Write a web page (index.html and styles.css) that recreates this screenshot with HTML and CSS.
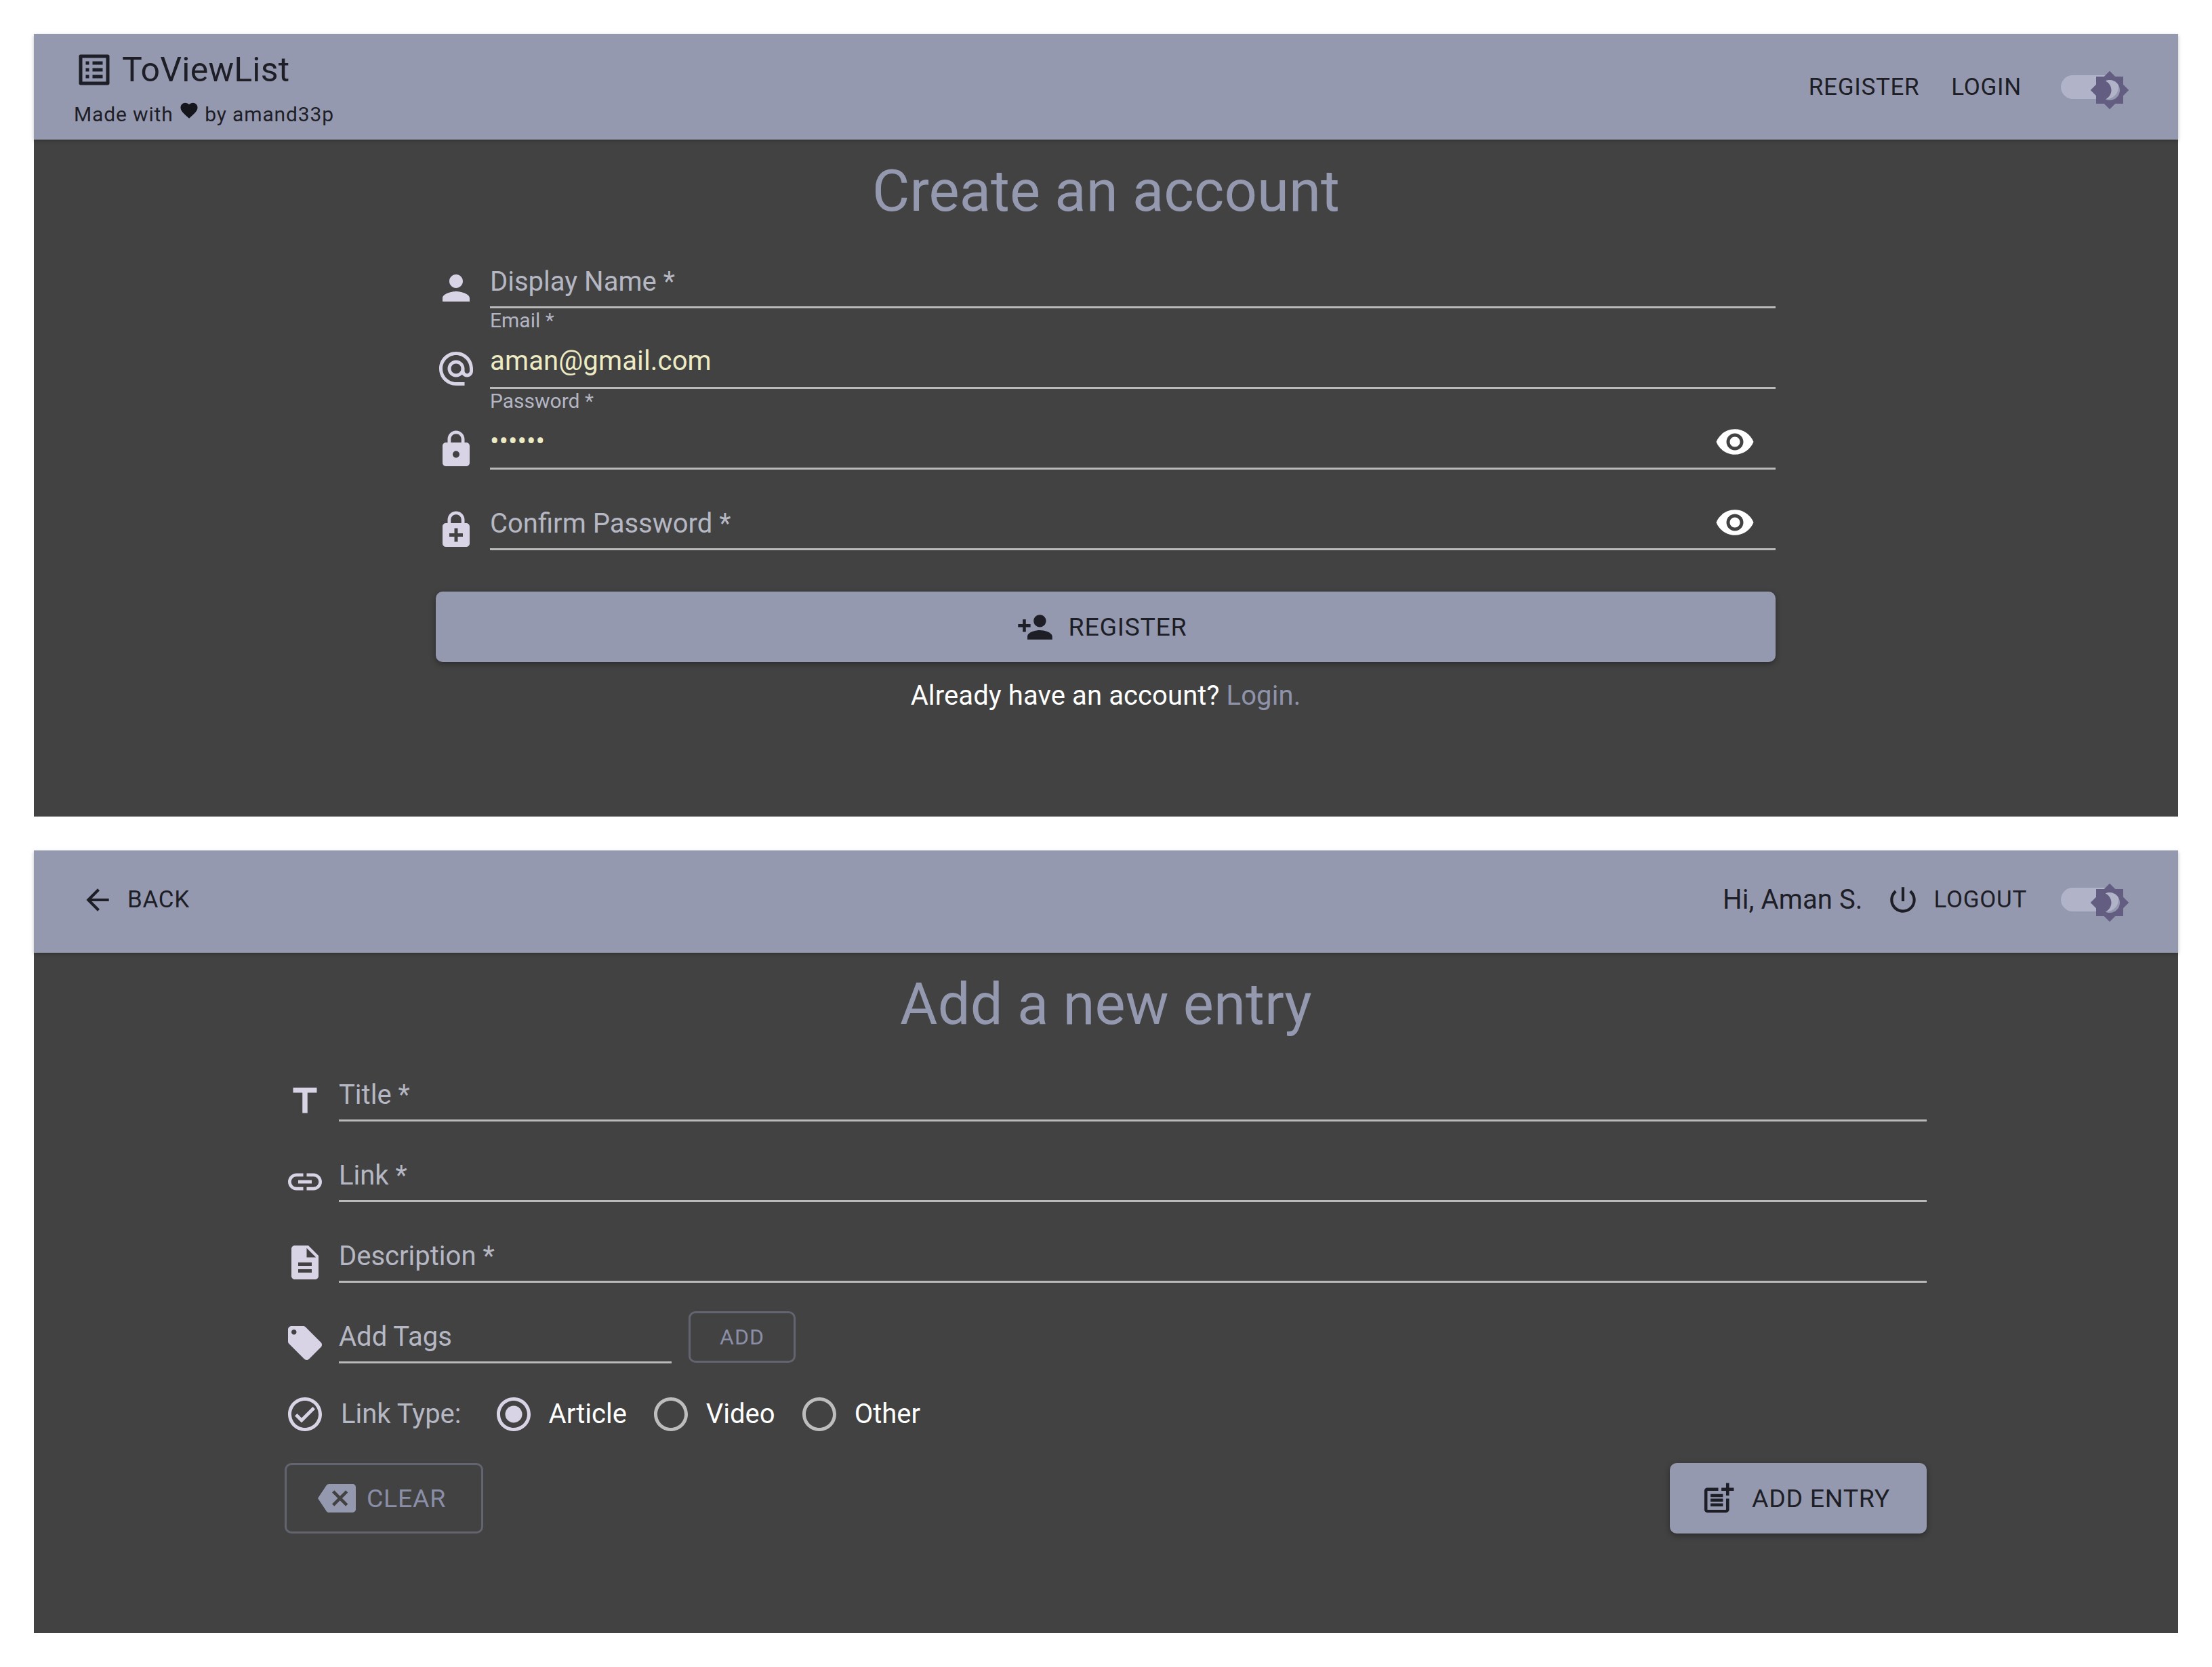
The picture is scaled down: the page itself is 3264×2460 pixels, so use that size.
FILE: index.html
```html
<!DOCTYPE html>
<html lang="en">
  <head>
    <meta charset="UTF-8" />
    <title>ToViewList</title>
    <link rel="stylesheet" href="styles.css">
  </head>
  <body>
    <!-- register screen -->
    <section class="panel">
      <header class="topbar topbar-brand">
        <div class="brand">
          <div class="brand-row">
            <svg class="icon" viewBox="0 0 24 24"><path d="M19 5v14H5V5h14m1.1-2H3.9c-.5 0-.9.4-.9.9v16.2c0 .4.4.9.9.9h16.2c.4 0 .9-.5.9-.9V3.9c0-.5-.5-.9-.9-.9zM11 7h6v2h-6V7zm0 4h6v2h-6v-2zm0 4h6v2h-6zM7 7h2v2H7zm0 4h2v2H7zm0 4h2v2H7z"/></svg>
            <span class="brand-name">ToViewList</span>
          </div>
          <p class="tagline">Made with
            <svg class="heart" viewBox="0 0 24 24"><path d="M12 21.35l-1.45-1.32C5.4 15.36 2 12.28 2 8.5 2 5.42 4.42 3 7.5 3c1.74 0 3.41.81 4.5 2.09C13.09 3.81 14.76 3 16.5 3 19.58 3 22 5.42 22 8.5c0 3.78-3.4 6.86-8.55 11.54L12 21.35z"/></svg>
            by amand33p</p>
        </div>
        <nav class="nav">
          <a class="nav-link nav-register">REGISTER</a>
          <a class="nav-link">LOGIN</a>
          <div class="switch">
            <svg class="switch-thumb" viewBox="0 0 24 24"><path d="M20 8.69V4h-4.69L12 .69 8.69 4H4v4.69L.69 12 4 15.31V20h4.69L12 23.31 15.31 20H20v-4.69L23.31 12 20 8.69zM12 18c-.89 0-1.74-.2-2.5-.55C11.56 16.5 13 14.42 13 12s-1.44-4.5-3.5-5.45C10.26 6.2 11.11 6 12 6c3.31 0 6 2.69 6 6s-2.69 6-6 6z"/></svg>
          </div>
        </nav>
      </header>

      <h1 class="page-title">Create an account</h1>

      <form class="form form-small">
        <div class="row">
          <svg class="icon field-icon" viewBox="0 0 24 24"><path d="M12 12c2.21 0 4-1.79 4-4s-1.79-4-4-4-4 1.79-4 4 1.79 4 4 4zm0 2c-2.67 0-8 1.34-8 4v2h16v-2c0-2.66-5.33-4-8-4z"/></svg>
          <div class="field">
            <div class="field-line"><span class="placeholder">Display Name *</span></div>
          </div>
        </div>
        <div class="row">
          <svg class="icon field-icon" viewBox="0 0 24 24"><path d="M12 2C6.48 2 2 6.48 2 12s4.48 10 10 10h5v-2h-5c-4.34 0-8-3.66-8-8s3.66-8 8-8 8 3.66 8 8v1.43c0 .79-.71 1.57-1.5 1.57s-1.5-.78-1.5-1.57V12c0-2.76-2.24-5-5-5s-5 2.24-5 5 2.24 5 5 5c1.38 0 2.64-.56 3.54-1.47.65.89 1.77 1.47 2.96 1.47 1.97 0 3.5-1.6 3.5-3.57V12c0-5.52-4.48-10-10-10zm0 13c-1.66 0-3-1.34-3-3s1.34-3 3-3 3 1.34 3 3-1.34 3-3 3z"/></svg>
          <div class="field">
            <label class="float-label">Email *</label>
            <div class="field-line"><span class="value">aman@gmail.com</span></div>
          </div>
        </div>
        <div class="row">
          <svg class="icon field-icon" viewBox="0 0 24 24"><path d="M18 8h-1V6c0-2.76-2.24-5-5-5S7 3.24 7 6v2H6c-1.1 0-2 .9-2 2v10c0 1.1.9 2 2 2h12c1.1 0 2-.9 2-2V10c0-1.1-.9-2-2-2zm-6 9c-1.1 0-2-.9-2-2s.9-2 2-2 2 .9 2 2-.9 2-2 2zm3.1-9H8.9V6c0-1.71 1.39-3.1 3.1-3.1 1.71 0 3.1 1.39 3.1 3.1v2z"/></svg>
          <div class="field">
            <label class="float-label">Password *</label>
            <div class="field-line">
              <span class="value dots">••••••</span>
              <svg class="icon eye" viewBox="0 0 24 24"><path d="M12 4.5C7 4.5 2.73 7.61 1 12c1.73 4.39 6 7.5 11 7.5s9.27-3.11 11-7.5c-1.73-4.39-6-7.5-11-7.5zM12 17c-2.76 0-5-2.24-5-5s2.24-5 5-5 5 2.24 5 5-2.24 5-5 5zm0-8c-1.66 0-3 1.34-3 3s1.34 3 3 3 3-1.34 3-3-1.34-3-3-3z"/></svg>
            </div>
          </div>
        </div>
        <div class="row">
          <svg class="icon field-icon" viewBox="0 0 24 24"><path d="M18 8h-1V6c0-2.76-2.24-5-5-5S7 3.24 7 6v2H6c-1.11 0-2 .9-2 2v10c0 1.1.89 2 2 2h12c1.1 0 2-.9 2-2V10c0-1.1-.9-2-2-2zM8.9 6c0-1.71 1.39-3.1 3.1-3.1s3.1 1.39 3.1 3.1v2H8.9V6zM16 16h-3v3h-2v-3H8v-2h3v-3h2v3h3v2z"/></svg>
          <div class="field">
            <div class="field-line">
              <span class="placeholder">Confirm Password *</span>
              <svg class="icon eye" viewBox="0 0 24 24"><path d="M12 4.5C7 4.5 2.73 7.61 1 12c1.73 4.39 6 7.5 11 7.5s9.27-3.11 11-7.5c-1.73-4.39-6-7.5-11-7.5zM12 17c-2.76 0-5-2.24-5-5s2.24-5 5-5 5 2.24 5 5-2.24 5-5 5zm0-8c-1.66 0-3 1.34-3 3s1.34 3 3 3 3-1.34 3-3-1.34-3-3-3z"/></svg>
            </div>
          </div>
        </div>
        <button type="button" class="btn btn-solid btn-wide">
          <svg class="btn-icon" viewBox="0 0 24 24"><path d="M15 12c2.21 0 4-1.79 4-4s-1.79-4-4-4-4 1.79-4 4 1.79 4 4 4zm-9-2V7H4v3H1v2h3v3h2v-3h3v-2H6zm9 4c-2.67 0-8 1.34-8 4v2h16v-2c0-2.66-5.33-4-8-4z"/></svg>
          REGISTER
        </button>
        <p class="switch-text">Already have an account? <a class="switch-link">Login.</a></p>
      </form>
    </section>

    <!-- add entry screen -->
    <section class="panel">
      <header class="topbar topbar-slim">
        <a class="back">
          <svg class="nav-icon" viewBox="0 0 24 24"><path d="M20 11H7.83l5.59-5.59L12 4l-8 8 8 8 1.41-1.41L7.83 13H20v-2z"/></svg>
          BACK
        </a>
        <nav class="nav">
          <span class="greeting">Hi, Aman S.</span>
          <a class="nav-link logout">
            <svg class="nav-icon" viewBox="0 0 24 24"><path d="M13 3h-2v10h2V3zm4.83 2.17l-1.42 1.42C17.99 7.86 19 9.81 19 12c0 3.87-3.13 7-7 7s-7-3.13-7-7c0-2.19 1.01-4.14 2.58-5.42L6.17 5.17C4.23 6.82 3 9.26 3 12c0 4.97 4.03 9 9 9s9-4.03 9-9c0-2.74-1.23-5.18-3.17-6.83z"/></svg>
            LOGOUT
          </a>
          <div class="switch">
            <svg class="switch-thumb" viewBox="0 0 24 24"><path d="M20 8.69V4h-4.69L12 .69 8.69 4H4v4.69L.69 12 4 15.31V20h4.69L12 23.31 15.31 20H20v-4.69L23.31 12 20 8.69zM12 18c-.89 0-1.74-.2-2.5-.55C11.56 16.5 13 14.42 13 12s-1.44-4.5-3.5-5.45C10.26 6.2 11.11 6 12 6c3.31 0 6 2.69 6 6s-2.69 6-6 6z"/></svg>
          </div>
        </nav>
      </header>

      <h1 class="page-title">Add a new entry</h1>

      <form class="form form-large">
        <div class="row">
          <svg class="icon field-icon" viewBox="0 0 24 24"><path d="M5 4v3h5.5v12h3V7H19V4z"/></svg>
          <div class="field">
            <div class="field-line"><span class="placeholder">Title *</span></div>
          </div>
        </div>
        <div class="row">
          <svg class="icon field-icon" viewBox="0 0 24 24"><path d="M3.9 12c0-1.71 1.39-3.1 3.1-3.1h4V7H7c-2.76 0-5 2.24-5 5s2.24 5 5 5h4v-1.9H7c-1.71 0-3.1-1.39-3.1-3.1zM8 13h8v-2H8v2zm9-6h-4v1.9h4c1.71 0 3.1 1.39 3.1 3.1s-1.39 3.1-3.1 3.1h-4V17h4c2.76 0 5-2.24 5-5s-2.24-5-5-5z"/></svg>
          <div class="field">
            <div class="field-line"><span class="placeholder">Link *</span></div>
          </div>
        </div>
        <div class="row">
          <svg class="icon field-icon" viewBox="0 0 24 24"><path d="M14 2H6c-1.1 0-1.99.9-1.99 2L4 20c0 1.1.89 2 1.99 2H18c1.1 0 2-.9 2-2V8l-6-6zm2 16H8v-2h8v2zm0-4H8v-2h8v2zm-3-5V3.5L18.5 9H13z"/></svg>
          <div class="field">
            <div class="field-line"><span class="placeholder">Description *</span></div>
          </div>
        </div>
        <div class="row">
          <svg class="icon field-icon" viewBox="0 0 24 24"><path d="M21.41 11.58l-9-9C12.05 2.22 11.55 2 11 2H4c-1.1 0-2 .9-2 2v7c0 .55.22 1.05.59 1.42l9 9c.36.36.86.58 1.41.58.55 0 1.05-.22 1.41-.59l7-7c.37-.36.59-.86.59-1.41 0-.55-.23-1.06-.59-1.42zM5.5 7C4.67 7 4 6.33 4 5.5S4.67 4 5.5 4 7 4.67 7 5.5 6.33 7 5.5 7z"/></svg>
          <div class="field field-tags">
            <div class="field-line"><span class="placeholder">Add Tags</span></div>
          </div>
          <button type="button" class="btn btn-outline btn-add">ADD</button>
        </div>

        <div class="link-type">
          <svg class="icon field-icon" viewBox="0 0 24 24"><path d="M12 2C6.48 2 2 6.48 2 12s4.48 10 10 10 10-4.48 10-10S17.52 2 12 2zm0 18c-4.41 0-8-3.59-8-8s3.59-8 8-8 8 3.59 8 8-3.59 8-8 8zm4.59-12.42L10 14.17l-2.59-2.58L6 13l4 4 8-8z"/></svg>
          <span class="link-type-label">Link Type:</span>
          <label class="radio">
            <svg class="icon radio-on" viewBox="0 0 24 24"><path d="M12 2C6.48 2 2 6.48 2 12s4.48 10 10 10 10-4.48 10-10S17.52 2 12 2zm0 18c-4.42 0-8-3.58-8-8s3.58-8 8-8 8 3.58 8 8-3.58 8-8 8z"/><circle cx="12" cy="12" r="5"/></svg>
            <span class="radio-text">Article</span>
          </label>
          <label class="radio">
            <svg class="icon radio-off" viewBox="0 0 24 24"><path d="M12 2C6.48 2 2 6.48 2 12s4.48 10 10 10 10-4.48 10-10S17.52 2 12 2zm0 18c-4.42 0-8-3.58-8-8s3.58-8 8-8 8 3.58 8 8-3.58 8-8 8z"/></svg>
            <span class="radio-text">Video</span>
          </label>
          <label class="radio">
            <svg class="icon radio-off" viewBox="0 0 24 24"><path d="M12 2C6.48 2 2 6.48 2 12s4.48 10 10 10 10-4.48 10-10S17.52 2 12 2zm0 18c-4.42 0-8-3.58-8-8s3.58-8 8-8 8 3.58 8 8-3.58 8-8 8z"/></svg>
            <span class="radio-text">Other</span>
          </label>
        </div>

        <div class="actions">
          <button type="button" class="btn btn-outline btn-clear">
            <svg class="clear-icon" viewBox="0 0 24 24"><path d="M22 3H7c-.69 0-1.23.35-1.59.88L0 12l5.41 8.11c.36.53.9.89 1.59.89h15c1.1 0 2-.9 2-2V5c0-1.1-.9-2-2-2zm-3 12.59L17.59 17 14 13.41 10.41 17 9 15.59 12.59 12 9 8.41 10.41 7 14 10.59 17.59 7 19 8.41 15.41 12 19 15.59z"/></svg>
            CLEAR
          </button>
          <button type="button" class="btn btn-solid btn-entry">
            <svg class="btn-icon" viewBox="0 0 24 24"><path d="M17 19.22H5V7h7V5H5c-1.1 0-2 .9-2 2v12c0 1.1.9 2 2 2h12c1.1 0 2-.9 2-2v-7h-2v7.22zM19 2h-2v3h-3c.01.01 0 2 0 2h3v2.99c.01.01 2 0 2 0V7h3V5h-3V2zM7 9h8v2H7zm0 3v2h8v-2h-3zm0 3h8v2H7z"/></svg>
            ADD ENTRY
          </button>
        </div>
      </form>
    </section>
  </body>
</html>
```

FILE: styles.css
```css
* {
  margin: 0;
  padding: 0;
  box-sizing: border-box;
  font-family: "Roboto", "Liberation Sans", sans-serif;
}

body {
  background-color: #ffffff;
  padding: 50px;
  display: flex;
  flex-direction: column;
  gap: 50px;
}

.panel {
  height: 1155px;
  background-color: #424242;
}

.icon {
  width: 60px;
  height: 60px;
  flex-shrink: 0;
  fill: currentColor;
}

/* top bars */

.topbar {
  display: flex;
  justify-content: space-between;
  align-items: center;
  background-color: #9599b0;
  color: #1d1e26;
  box-shadow: 0 2px 5px rgba(0, 0, 0, 0.25);
}

.topbar-brand {
  height: 156px;
}

.topbar-slim {
  height: 151px;
  padding-bottom: 6px;
}

.brand {
  align-self: flex-start;
  padding: 23px 0 0 59px;
}

.brand-row {
  display: flex;
  align-items: center;
  gap: 11px;
}

.brand-name {
  font-size: 50px;
  line-height: 60px;
  letter-spacing: 0.2px;
}

.tagline {
  margin-top: 15px;
  font-size: 30px;
  line-height: 36px;
  letter-spacing: 0.85px;
}

.heart {
  width: 30px;
  height: 30px;
  fill: #15161c;
  vertical-align: 1px;
}

.nav {
  display: flex;
  align-items: center;
  padding-right: 88px;
}

.nav-link {
  display: flex;
  align-items: center;
  font-size: 35px;
  letter-spacing: 0.7px;
}

.nav-register {
  margin-right: 47px;
}

.nav-icon {
  width: 50px;
  height: 50px;
  flex-shrink: 0;
  fill: currentColor;
}

.back {
  display: flex;
  align-items: center;
  gap: 19px;
  padding-left: 69px;
  font-size: 35px;
  letter-spacing: 0.7px;
}

.greeting {
  font-size: 40px;
  letter-spacing: 0.1px;
  margin-right: 35px;
}

.logout {
  gap: 20px;
  margin-right: -8px;
}

.switch {
  position: relative;
  width: 85px;
  height: 35px;
  margin-left: 58px;
  border-radius: 18px;
  background-color: #b1b3c9;
}

.switch-thumb {
  position: absolute;
  left: 42px;
  top: -8px;
  width: 60px;
  height: 60px;
  fill: #635e81;
}

/* forms */

.page-title {
  margin: 24px 0 1px;
  text-align: center;
  font-size: 85px;
  line-height: 105px;
  font-weight: 400;
  letter-spacing: 0.1px;
  color: #9599b0;
}

.form-small {
  width: 1977px;
  margin-left: 593px;
}

.form-large {
  width: 2423px;
  margin-left: 370px;
}

.row {
  display: flex;
  align-items: flex-end;
  gap: 20px;
}

.field-icon {
  color: #d8d4e6;
}

.field {
  flex: 1;
  height: 119px;
  display: flex;
  flex-direction: column;
  border-bottom: 3px solid #b9b9b9;
}

.field-tags {
  flex: none;
  width: 491px;
}

.float-label {
  font-size: 30px;
  line-height: 36px;
  color: #b3b5c2;
}

.field-line {
  margin-top: auto;
  height: 66px;
  padding-bottom: 6px;
  display: flex;
  justify-content: space-between;
  align-items: center;
  font-size: 40px;
  line-height: 60px;
}

.placeholder {
  color: #b5b7c2;
}

.value {
  margin-bottom: 4px;
  color: #ecebc4;
  letter-spacing: 0.15px;
}

.dots {
  letter-spacing: 0;
}

.eye {
  margin: 0 30px 4px 0;
  color: #ffffff;
}

.btn {
  display: flex;
  align-items: center;
  justify-content: center;
  gap: 22px;
  height: 104px;
  font-size: 37.5px;
  letter-spacing: 0.7px;
  border-radius: 10px;
  cursor: pointer;
}

.btn-icon {
  width: 55px;
  height: 55px;
  flex-shrink: 0;
  fill: currentColor;
}

.btn-solid {
  border: none;
  background-color: #9599b0;
  color: #1d1e26;
  box-shadow: 0 3px 8px rgba(0, 0, 0, 0.35);
}

.btn-outline {
  border: 3px solid #62646f;
  background-color: transparent;
  color: #8a8ea6;
}

.btn-wide {
  width: 100%;
  margin-top: 61px;
  padding-right: 12px;
}

.btn-add {
  width: 158px;
  height: 76px;
  margin-left: 5px;
  margin-bottom: 1px;
  font-size: 32px;
  letter-spacing: 1px;
}

.switch-text {
  margin-top: 20px;
  text-align: center;
  font-size: 40px;
  line-height: 60px;
  letter-spacing: 0.1px;
  color: #ffffff;
}

.switch-link {
  color: #8f93aa;
}

.link-type {
  display: flex;
  align-items: center;
  margin-top: 45px;
  height: 60px;
  font-size: 40px;
  color: #ffffff;
}

.link-type-label {
  margin: 0 47px 2px 23px;
  color: #b5b7c2;
}

.radio {
  display: flex;
  align-items: center;
  gap: 22px;
  margin-right: 35px;
}

.radio-text {
  margin-bottom: 2px;
}

.radio-on {
  color: #d8d4e6;
}

.radio-off {
  color: #bdbdbd;
}

.actions {
  display: flex;
  justify-content: space-between;
  margin-top: 42px;
}

.btn-clear {
  width: 293px;
  gap: 16px;
  padding-right: 6px;
}

.clear-icon {
  width: 56px;
  height: 56px;
  flex-shrink: 0;
  fill: #9599b0;
}

.btn-entry {
  width: 379px;
  padding-right: 10px;
}
```
